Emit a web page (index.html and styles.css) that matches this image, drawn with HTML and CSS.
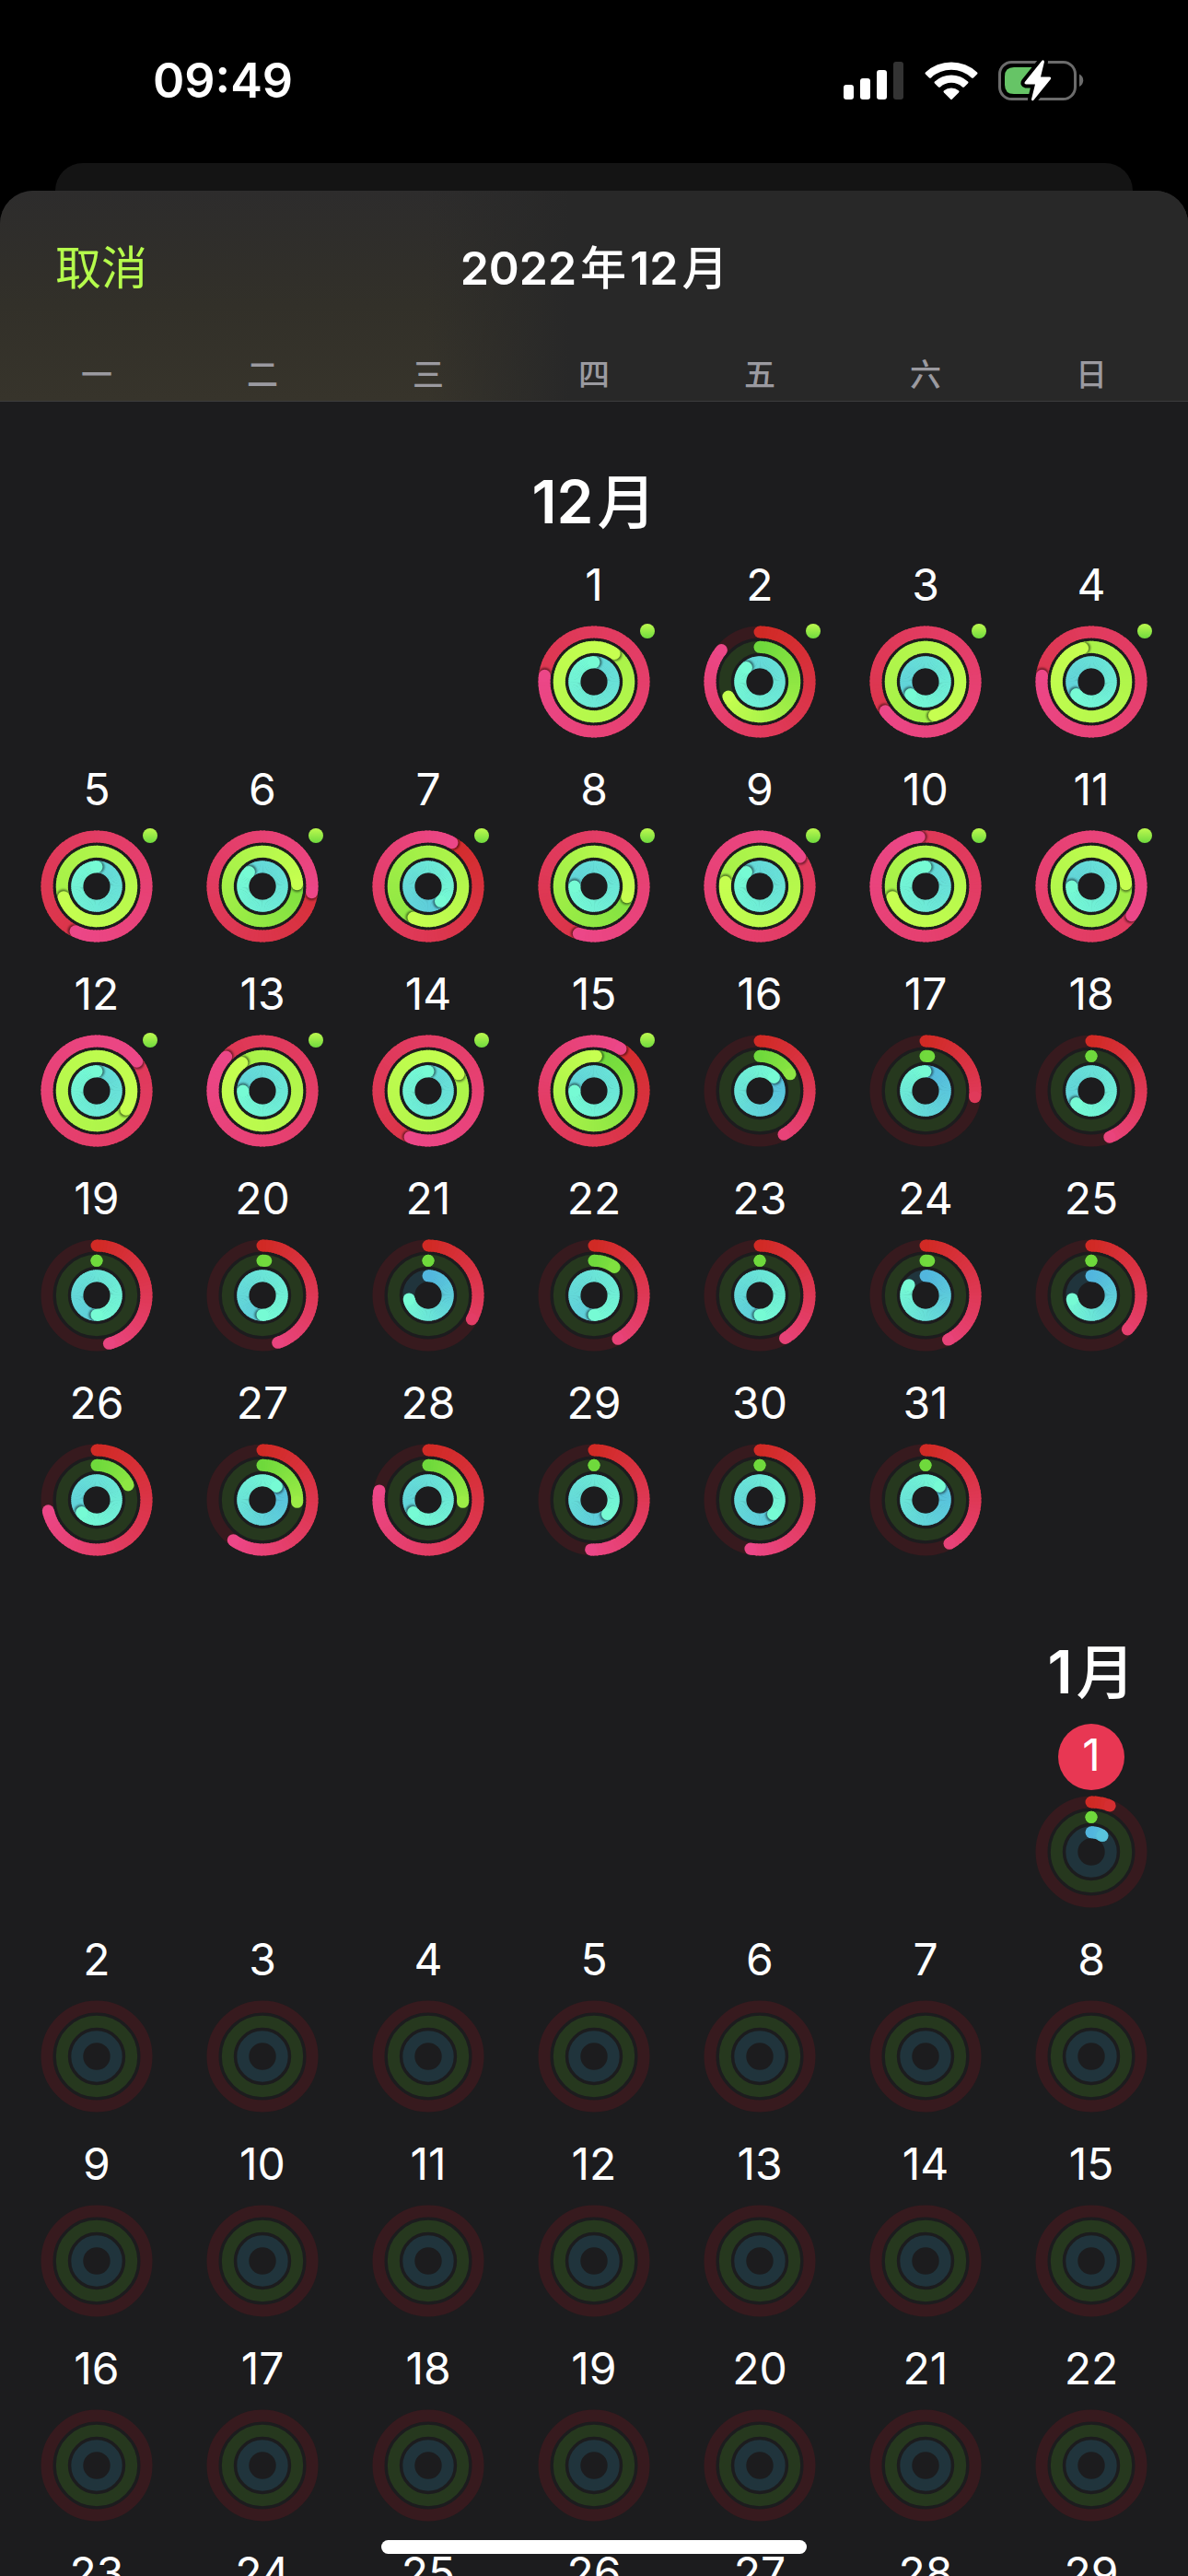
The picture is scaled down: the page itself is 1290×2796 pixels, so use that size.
FILE: index.html
```html
<!DOCTYPE html>
<html lang="zh-CN">
<head>
  <meta charset="UTF-8">
  <meta name="viewport" content="width=device-width, initial-scale=1">
  <title>2022年12月</title>
  <link rel="stylesheet" href="styles.css">
</head>
<body>
  <div class="status-bar">
    <span class="time">09:49</span>
    <div class="status-icons">
      <svg width="66" height="42" viewBox="0 0 66 42" aria-hidden="true">
        <rect x="0" y="26" width="11" height="16" rx="3" fill="#fff"/>
        <rect x="18" y="19" width="11" height="23" rx="3" fill="#fff"/>
        <rect x="36" y="10" width="11" height="32" rx="3" fill="#fff"/>
        <rect x="54" y="1" width="11" height="41" rx="3" fill="#333"/>
      </svg>
      <svg width="58" height="43" viewBox="0 0 58 43" fill="#fff" aria-hidden="true">
        <path d="M1 12.5 Q0 13.5 1 14.5 L5 18.4 Q6 19.3 7 18.4 A32 32 0 0 1 51 18.4 Q52 19.3 53 18.4 L57 14.5 Q58 13.5 57 12.5 A41 41 0 0 0 1 12.5 Z"/>
        <path d="M11 22.6 Q10 23.6 11 24.6 L15 28.4 Q16 29.3 17 28.4 A18 18 0 0 1 41 28.4 Q42 29.3 43 28.4 L47 24.6 Q48 23.6 47 22.6 A26.500 26.500 0 0 0 11 22.6 Z"/>
        <path d="M20.800 32.500 Q20 33.500 21 34.500 L28 41.500 Q29 42.500 30 41.500 L37 34.500 Q38 33.500 37.200 32.500 A12.500 12.500 0 0 0 20.800 32.500 Z"/>
      </svg>
      <svg width="94" height="48" viewBox="0 0 94 48" aria-hidden="true">
        <rect x="1.500" y="4.500" width="82" height="40" rx="13" fill="none" stroke="#6b6b6b" stroke-width="3"/>
        <path d="M88 17.500 A7.500 7.500 0 0 1 88 31 Z" fill="#6b6b6b"/>
        <path d="M17 10 H38 V39 H17 Q7 39 7 29 V20 Q7 10 17 10 Z" fill="#66c466"/>
        <path d="M47.500 2.800 Q49.500 1.500 50 4 L46 20.500 H55.500 Q58 20.500 56.800 23 L38.500 45.500 Q36.500 47.500 36 44.800 L40 28.500 H30 Q27.500 28 29 25.800 Z" fill="#fff" stroke="#000" stroke-width="8" stroke-linejoin="round" paint-order="stroke"/>
      </svg>
    </div>
  </div>

  <div class="back-card"></div>

  <main class="sheet">
    <header class="sheet-header">
      <div class="nav">
        <button class="cancel" type="button">取消</button>
        <h1>2022<span class="unit">年</span>12<span class="unit">月</span></h1>
      </div>
      <div class="weekdays">
        <span>一</span><span>二</span><span>三</span><span>四</span><span>五</span><span>六</span><span>日</span>
      </div>
    </header>
    <div class="calendar" id="calendar"></div>
  </main>

  <div class="home-indicator"></div>
  <script src="script.js"></script>
</body>
</html>
```
FILE: styles.css
```css
* {
  box-sizing: border-box;
}
body {
  margin: 0;
  height: 100vh;
  display: flex;
  flex-direction: column;
  overflow: hidden;
  background: #000;
  color: #fff;
  font-family: Inter, "Noto Sans CJK SC", sans-serif;
}
h1, h2 {
  margin: 0;
  font-weight: 600;
}
.unit {
  margin: 0 4px;
  font-weight: 500;
}
.unit:last-child {
  margin-right: 0;
}

.status-bar {
  flex: none;
  height: 177px;
  padding: 56px 112px 0 166px;
  display: flex;
  justify-content: space-between;
  align-items: flex-start;
}
.time {
  font-size: 52px;
  line-height: 64px;
  font-weight: 600;
}
.status-icons {
  display: flex;
  align-items: center;
  gap: 22px;
  height: 62px;
}

.back-card {
  flex: none;
  height: 30px;
  margin: 0 60px;
  background: #141414;
  border-radius: 30px 30px 0 0;
}
.sheet {
  flex: 1;
  min-height: 0;
  display: flex;
  flex-direction: column;
  overflow: hidden;
  background: #1c1c1e;
  border-radius: 36px 36px 0 0;
}
.sheet-header {
  flex: none;
  border-bottom: 1px solid #3c3c3e;
  background:
    linear-gradient(to right, transparent 36%, #282828 48%),
    linear-gradient(#2d2c2c, #323029 55%, #37342b);
}
.nav {
  height: 168px;
  padding: 0 60px;
  display: grid;
  grid-template-columns: 1fr auto 1fr;
  align-items: center;
}
.cancel {
  justify-self: start;
  padding: 0;
  border: 0;
  background: none;
  color: #b5fc4c;
  font: inherit;
  font-size: 50px;
  line-height: 60px;
}
.nav h1 {
  font-size: 50px;
  line-height: 60px;
}
.weekdays {
  height: 60px;
  padding: 0 15px;
  display: grid;
  grid-template-columns: repeat(7, 1fr);
  text-align: center;
  color: #9b9aa0;
  font-size: 34px;
  line-height: 64px;
  font-weight: 500;
}

.calendar {
  flex: 1;
  min-height: 0;
  padding: 5px 15px 0;
  overflow-y: auto;
  scrollbar-width: none;
}
.month {
  display: grid;
  grid-template-columns: repeat(7, 1fr);
}
.month h2 {
  padding: 64px 0 16px;
  text-align: center;
  font-size: 64px;
  line-height: 80px;
  white-space: nowrap;
}
.day {
  display: flex;
  flex-direction: column;
  align-items: center;
  gap: 6px;
  padding-bottom: 22px;
}
.number {
  width: 72px;
  height: 72px;
  border-radius: 50%;
  text-align: center;
  font-size: 48px;
  line-height: 68px;
}
.today .number {
  background: #e83753;
}
.rings {
  position: relative;
  width: 122px;
  height: 122px;
}
.rings svg {
  display: block;
}
.workout {
  position: absolute;
  top: -2px;
  right: -5px;
  width: 16px;
  height: 16px;
  border-radius: 50%;
  background: linear-gradient(#bdf94f, #6fda3e);
}

.home-indicator {
  position: fixed;
  left: 50%;
  bottom: 24px;
  width: 462px;
  height: 15px;
  margin-left: -231px;
  border-radius: 8px;
  background: #fff;
}
```
FILE: script.js
```js
// move / exercise / stand, 1 = goal reached
const december = [
  [1.77, 3.10, 2.00], [0.86, 0.68, 1.88], [1.65, 2.46, 1.64], [1.77, 2.96, 1.64],
  [1.57, 2.70, 2.00], [1.27, 1.24, 1.88], [1.08, 1.57, 1.39], [1.55, 1.30, 1.75],
  [2.15, 2.77, 1.88], [1.98, 2.70, 2.00], [2.35, 2.24, 1.75], [2.15, 3.34, 2.00],
  [1.87, 2.90, 1.75], [1.56, 3.17, 2.00], [1.09, 1.01, 1.75], [0.42, 0.17, 1.13],
  [0.27, 0.016, 1.00], [0.44, 0, 1.64], [0.46, 0, 1.50], [0.45, 0.016, 1.50],
  [0.33, 0, 0.72], [0.42, 0.10, 1.50], [0.415, 0, 1.50], [0.425, 0.016, 0.84],
  [0.37, 0, 0.72], [0.715, 0.18, 1.64], [0.60, 0.26, 1.13], [0.78, 0.26, 1.64],
  [0.51, 0, 1.38], [0.53, 0, 1.38], [0.42, 0, 1.13]
];
const january = [[0.061, 0, 0.096]];

const RINGS = [
  { r: 54, track: "#371a1e", from: [209, 42, 37], to: [236, 71, 136] },
  { r: 37.7, track: "#26381e", from: [111, 217, 60], to: [198, 255, 80] },
  { r: 21.2, track: "#20343c", from: [82, 182, 222], to: [118, 251, 212] }
];
const C = 61;
const W = 13;

function point(r, t) {
  const a = t * Math.PI * 2;
  return [(C + r * Math.sin(a)).toFixed(2), (C - r * Math.cos(a)).toFixed(2)];
}

function drawRing(ring, value) {
  const { r, from, to, track } = ring;
  let out = `<circle cx="${C}" cy="${C}" r="${r}" fill="none" stroke="${track}" stroke-width="${W}"/>`;
  if (value === undefined) return out;

  const span = Math.max(value, 0.5);
  const color = t => `rgb(${from.map((c, i) => Math.round(c + (to[i] - c) * t / span)).join()})`;
  const start = Math.max(0, value - 1);
  const tip = point(r, value);

  if (value < 1) {
    const p = point(r, 0);
    out += `<circle cx="${p[0]}" cy="${p[1]}" r="${W / 2}" fill="${color(0)}"/>`;
  }
  const n = Math.ceil((value - start) * 90);
  const step = (value - start) / n;
  const shadowAt = value >= 1 ? Math.floor(n * 0.85) : -1;
  for (let i = 0; i < n; i++) {
    if (i === shadowAt) {
      const s = point(r, value + 1.5 / (Math.PI * 2 * r));
      out += `<g clip-path="url(#clip${r})"><circle cx="${s[0]}" cy="${s[1]}" r="7" fill="#000" opacity=".5" filter="url(#soft)"/></g>`;
    }
    const a = point(r, start + i * step);
    // small overlap so no seams show between the segments
    const b = point(r, Math.min(value, start + (i + 1.4) * step));
    out += `<path d="M${a} A${r} ${r} 0 0 1 ${b}" fill="none" stroke="${color(start + i * step)}" stroke-width="${W}"/>`;
  }
  return out + `<circle cx="${tip[0]}" cy="${tip[1]}" r="${W / 2}" fill="${color(value)}"/>`;
}

function drawDay(day, values, today) {
  const rings = RINGS.map((ring, i) => drawRing(ring, values && values[i])).join("");
  const dot = values && day <= 15 && !today ? '<span class="workout"></span>' : "";
  return `<div class="day${today ? " today" : ""}">
    <div class="number">${day}</div>
    <div class="rings"><svg width="122" height="122" viewBox="0 0 122 122">${rings}</svg>${dot}</div>
  </div>`;
}

function drawMonth(month, column, count, data, today) {
  let html = `<h2 style="grid-column: ${column}">${month}<span class="unit">月</span></h2>`;
  if (column < 7) html += `<span style="grid-column: ${column + 1} / 8"></span>`;
  if (column > 1) html += `<span style="grid-column: 1 / ${column}"></span>`;
  for (let d = 1; d <= count; d++) {
    html += drawDay(d, data[d - 1], d === today);
  }
  return `<section class="month">${html}</section>`;
}

// ring shaped clips keep the tip shadow inside its own ring
const clips = RINGS.map(({ r }) => {
  const o = r + W / 2, i = r - W / 2;
  const circle = q => `M${C - q} ${C} a${q} ${q} 0 1 0 ${q * 2} 0 a${q} ${q} 0 1 0 ${-q * 2} 0Z`;
  return `<clipPath id="clip${r}"><path clip-rule="evenodd" d="${circle(o)}${circle(i)}"/></clipPath>`;
}).join("");

document.getElementById("calendar").innerHTML =
  `<svg width="0" height="0" style="position: absolute"><defs>${clips}
    <filter id="soft" x="-50%" y="-50%" width="200%" height="200%"><feGaussianBlur stdDeviation="1.2"/></filter>
  </defs></svg>` +
  drawMonth(12, 4, 31, december) +
  drawMonth(1, 7, 31, january, 1);
```
